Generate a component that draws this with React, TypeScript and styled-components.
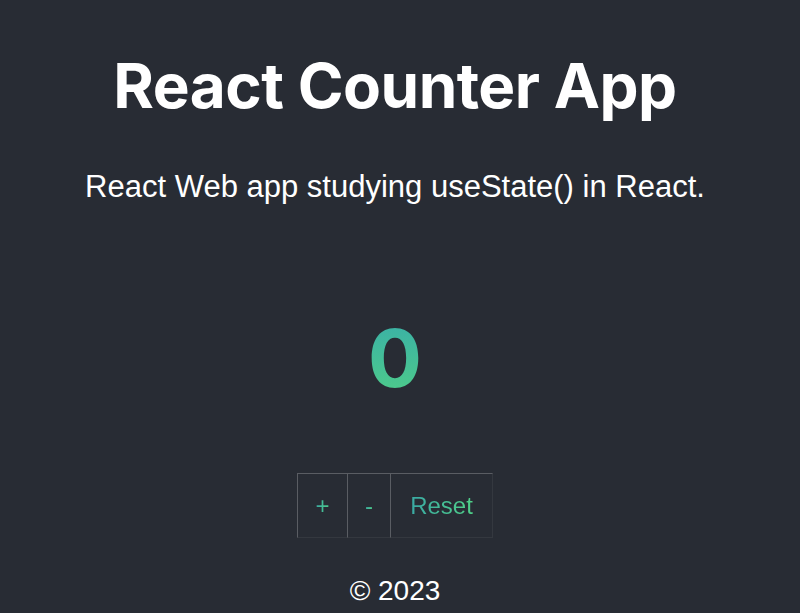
import {useState} from 'react';
import styled, {createGlobalStyle} from 'styled-components';

const GlobalStyle = createGlobalStyle`
  html, body {
    margin: 0;
    padding: 0;
    background-color: #282c34;
  }
  body {
    font-family: 'Liberation Sans', Arial, sans-serif;
    color: #ffffff;
  }
`;

const Page = styled.div`
  min-height: 613px;
  display: flex;
  flex-direction: column;
  align-items: center;
  text-align: center;
  padding-right: 10px;
`;

const Title = styled.h1`
  margin: 48px 0 0;
  font-family: Inter, 'Liberation Sans', sans-serif;
  font-size: 62px;
  font-weight: 700;
  letter-spacing: -0.5px;
  line-height: 76px;
`;

const Subtitle = styled.p`
  margin: 45px 0 0;
  font-family: 'Liberation Sans', Arial, sans-serif;
  font-size: 31px;
  line-height: 36px;
`;

const Count = styled.div`
  margin-top: 105px;
  font-family: Inter, 'Liberation Sans', sans-serif;
  font-size: 80px;
  font-weight: 700;
  line-height: 96px;
  background: linear-gradient(180deg, #38adaa 0%, #50cf86 100%);
  -webkit-background-clip: text;
  background-clip: text;
  color: transparent;
`;

const ButtonGroup = styled.div`
  margin-top: 67px;
  display: flex;
`;

const Button = styled.button<{$width: number}>`
  width: ${(p) => p.$width}px;
  height: 65px;
  padding: 0;
  background: transparent;
  border: 1px solid #34383f;
  border-top-color: #5a5d63;
  border-left-color: #5a5d63;
  margin-left: -1px;
  font-family: 'Liberation Sans', Arial, sans-serif;
  font-size: 24px;
  cursor: pointer;
  &:first-child {
    margin-left: 0;
  }
`;

const ButtonLabel = styled.span`
  background: linear-gradient(90deg, #3aa9a4 0%, #4fd088 100%);
  -webkit-background-clip: text;
  background-clip: text;
  color: transparent;
`;

const Footer = styled.footer`
  margin-top: 36px;
  font-family: 'Liberation Sans', Arial, sans-serif;
  font-size: 28px;
  line-height: 34px;
  color: #ffffff;
`;

export default function App() {
  const [count, setCount] = useState(0);

  return (
    <Page>
      <GlobalStyle />
      <Title>React Counter App</Title>
      <Subtitle>React Web app studying useState() in React.</Subtitle>
      <Count>{count}</Count>
      <ButtonGroup>
        <Button $width={51} onClick={() => setCount((c) => c + 1)}>
          <ButtonLabel>+</ButtonLabel>
        </Button>
        <Button $width={44} onClick={() => setCount((c) => c - 1)}>
          <ButtonLabel>-</ButtonLabel>
        </Button>
        <Button $width={103} onClick={() => setCount(0)}>
          <ButtonLabel>Reset</ButtonLabel>
        </Button>
      </ButtonGroup>
      <Footer>© 2023</Footer>
    </Page>
  );
}
